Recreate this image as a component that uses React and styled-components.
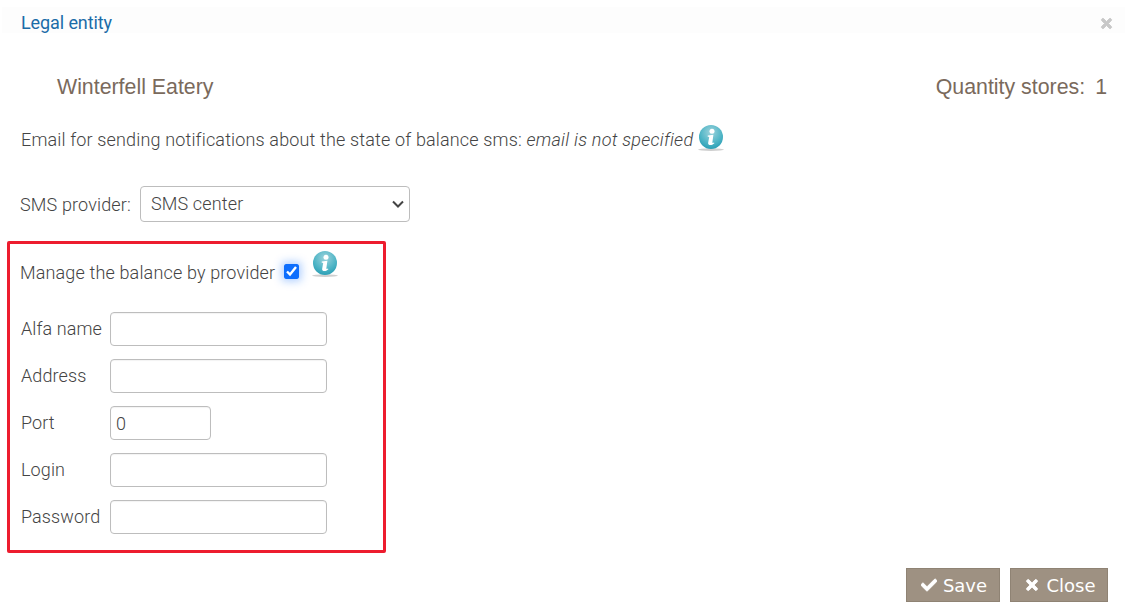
import React from "react";
import styled, { createGlobalStyle } from "styled-components";
import { FaCheck, FaTimes } from "react-icons/fa";

const GlobalStyle = createGlobalStyle`
  html, body {
    margin: 0;
    padding: 0;
    background: #ffffff;
    overflow: hidden;
  }
`;

const chevron = encodeURIComponent(
  '<svg xmlns="http://www.w3.org/2000/svg" viewBox="0 0 12 8"><path d="M1 1.5l5 5 5-5" fill="none" stroke="#444" stroke-width="2"/></svg>'
);

const Dialog = styled.div`
  width: 1127px;
  height: 615px;
  padding-top: 7px;
  box-sizing: border-box;
  font-family: Roboto, sans-serif;
  font-size: 18px;
  font-weight: 300;
  letter-spacing: 0.15px;
  color: #444444;
`;

const Header = styled.div`
  height: 26px;
  margin: 0 2px;
  padding: 6px 12px 0 19px;
  box-sizing: border-box;
  display: flex;
  align-items: center;
  justify-content: space-between;
  background: #fdfdfd;
`;

const Title = styled.h4`
  margin: 0;
  font-size: 18px;
  font-weight: 400;
  line-height: 20px;
  letter-spacing: -0.1px;
  color: #1b6ca8;
`;

const CloseX = styled(FaTimes)`
  width: 13px;
  height: 15px;
  color: #c8c8c8;
  stroke: #c8c8c8;
  stroke-width: 30;
`;

const Summary = styled.div`
  margin-top: 42px;
  padding: 0 20px 0 57px;
  display: flex;
  justify-content: space-between;
  font-family: "Liberation Sans", Arial, sans-serif;
  font-size: 21.33px;
  font-weight: 400;
  letter-spacing: 0;
  line-height: 24px;
  color: #7a6a5c;
`;

const StoreCount = styled.span`
  margin-left: 10px;
`;

const EmailLine = styled.div`
  margin-top: 28px;
  padding-left: 21px;
  height: 26px;
  display: flex;
  align-items: center;
  line-height: 26px;
  white-space: pre;
`;

const Muted = styled.em`
  font-style: italic;
  letter-spacing: 0.25px;
`;

const InfoMark = styled.svg`
  width: 28px;
  height: 28px;
  flex: none;
  margin: ${(p) => p.$margin};
`;

const ProviderRow = styled.div`
  margin-top: 33px;
  padding-left: 20px;
  display: flex;
  align-items: center;
  gap: 9px;
`;

const ProviderSelect = styled.select`
  width: 270px;
  height: 36px;
  padding: 0 6px 2px 10px;
  box-sizing: border-box;
  appearance: none;
  border: 1px solid #bdbdbd;
  border-radius: 4px;
  background: #ffffff url("data:image/svg+xml,${chevron}") no-repeat right 5px center / 12px 8px;
  font-family: Roboto, sans-serif;
  font-size: 18px;
  font-weight: 300;
  letter-spacing: 0.15px;
  color: #444444;
`;

const Highlight = styled.section`
  width: 379px;
  height: 312px;
  margin: 19px 0 0 7px;
  padding: 14px 0 0 10px;
  box-sizing: border-box;
  border: 3px solid #ed1c2e;
  border-radius: 2px;
`;

const ManageRow = styled.div`
  display: flex;
  align-items: flex-start;
  height: 36px;
`;

const ManageLabel = styled.label`
  margin-top: 2px;
  line-height: 26px;
`;

const ManageCheck = styled.input`
  width: 15px;
  height: 15px;
  margin: 6px 0 0 9px;
  accent-color: #0d6efd;
  box-shadow: 0 0 8px 2px rgba(13, 110, 253, 0.35);
`;

const Fields = styled.div`
  margin-top: 18px;
  display: flex;
  flex-direction: column;
  gap: 13px;
`;

const FieldRow = styled.div`
  display: flex;
  align-items: center;
  padding-left: 1px;
`;

const FieldLabel = styled.label`
  width: 89px;
  flex: none;
  line-height: 34px;
  letter-spacing: 0.1px;
`;

const TextInput = styled.input`
  width: ${(p) => p.$width}px;
  height: 34px;
  padding: 0 5px;
  box-sizing: border-box;
  border: 1px solid #bdbdbd;
  border-radius: 4px;
  font-family: Roboto, sans-serif;
  font-size: 18px;
  font-weight: 300;
  color: #444444;
  box-shadow: inset 0 1px 1px rgba(0, 0, 0, 0.05);
`;

const Footer = styled.div`
  margin-top: 15px;
  padding-right: 19px;
  display: flex;
  justify-content: flex-end;
  gap: 10px;
`;

const ActionButton = styled.button`
  width: ${(p) => p.$width}px;
  height: 34px;
  padding: 1px 0 0 2px;
  display: flex;
  align-items: center;
  justify-content: center;
  gap: 6px;
  border: 1px solid #8f8374;
  background: #9e9182;
  color: #ffffff;
  font-family: "DejaVu Sans", Verdana, sans-serif;
  font-size: 18px;
  svg {
    width: 16px;
    height: 16px;
    margin-top: -1px;
    stroke: #ffffff;
    stroke-width: 30;
  }
`;

function InfoIcon({ margin }) {
  return (
    <InfoMark viewBox="0 0 28 28" $margin={margin}>
      <defs>
        <radialGradient id="infoFill" cx="0.5" cy="0.3" r="0.7">
          <stop offset="0" stopColor="#9ed3dc" />
          <stop offset="0.65" stopColor="#4fb5c6" />
          <stop offset="1" stopColor="#2c9fb5" />
        </radialGradient>
      </defs>
      <ellipse cx="14" cy="24.6" rx="13" ry="1.3" fill="#cfcfcf" />
      <circle cx="14" cy="12" r="12" fill="url(#infoFill)" />
      <circle cx="15" cy="6.2" r="2.5" fill="#ffffff" />
      <path
        d="M10.8 10.4 L16.4 9.8 L15.4 17 C15.3 18 15.8 18.2 17 17.4 L17.4 18.2 C15.6 19.8 13.8 20.4 12.4 20 C11.2 19.6 11 18.6 11.2 17.6 L12.2 12 L10.6 11.6 Z"
        fill="#ffffff"
      />
    </InfoMark>
  );
}

const fields = [
  { label: "Alfa name", width: 217, value: "" },
  { label: "Address", width: 217, value: "" },
  { label: "Port", width: 101, value: "0" },
  { label: "Login", width: 217, value: "" },
  { label: "Password", width: 217, value: "" },
];

export default function App() {
  return (
    <>
      <GlobalStyle />
      <Dialog>
        <Header>
          <Title>Legal entity</Title>
          <CloseX />
        </Header>
        <Summary>
          <span>Winterfell Eatery</span>
          <span>
            Quantity stores:
            <StoreCount>1</StoreCount>
          </span>
        </Summary>
        <EmailLine>
          Email for sending notifications about the state of balance sms: <Muted>email is not specified</Muted>
          <InfoIcon margin="-2px 0 0 4px" />
        </EmailLine>
        <ProviderRow>
          <span>SMS provider:</span>
          <ProviderSelect defaultValue="sms-center">
            <option value="sms-center">SMS center</option>
          </ProviderSelect>
        </ProviderRow>
        <Highlight>
          <ManageRow>
            <ManageLabel>Manage the balance by provider</ManageLabel>
            <ManageCheck type="checkbox" defaultChecked />
            <InfoIcon margin="-7px 0 0 12px" />
          </ManageRow>
          <Fields>
            {fields.map((field) => (
              <FieldRow key={field.label}>
                <FieldLabel>{field.label}</FieldLabel>
                <TextInput $width={field.width} defaultValue={field.value} />
              </FieldRow>
            ))}
          </Fields>
        </Highlight>
        <Footer>
          <ActionButton $width={94}>
            <FaCheck />
            Save
          </ActionButton>
          <ActionButton $width={98}>
            <FaTimes />
            Close
          </ActionButton>
        </Footer>
      </Dialog>
    </>
  );
}
